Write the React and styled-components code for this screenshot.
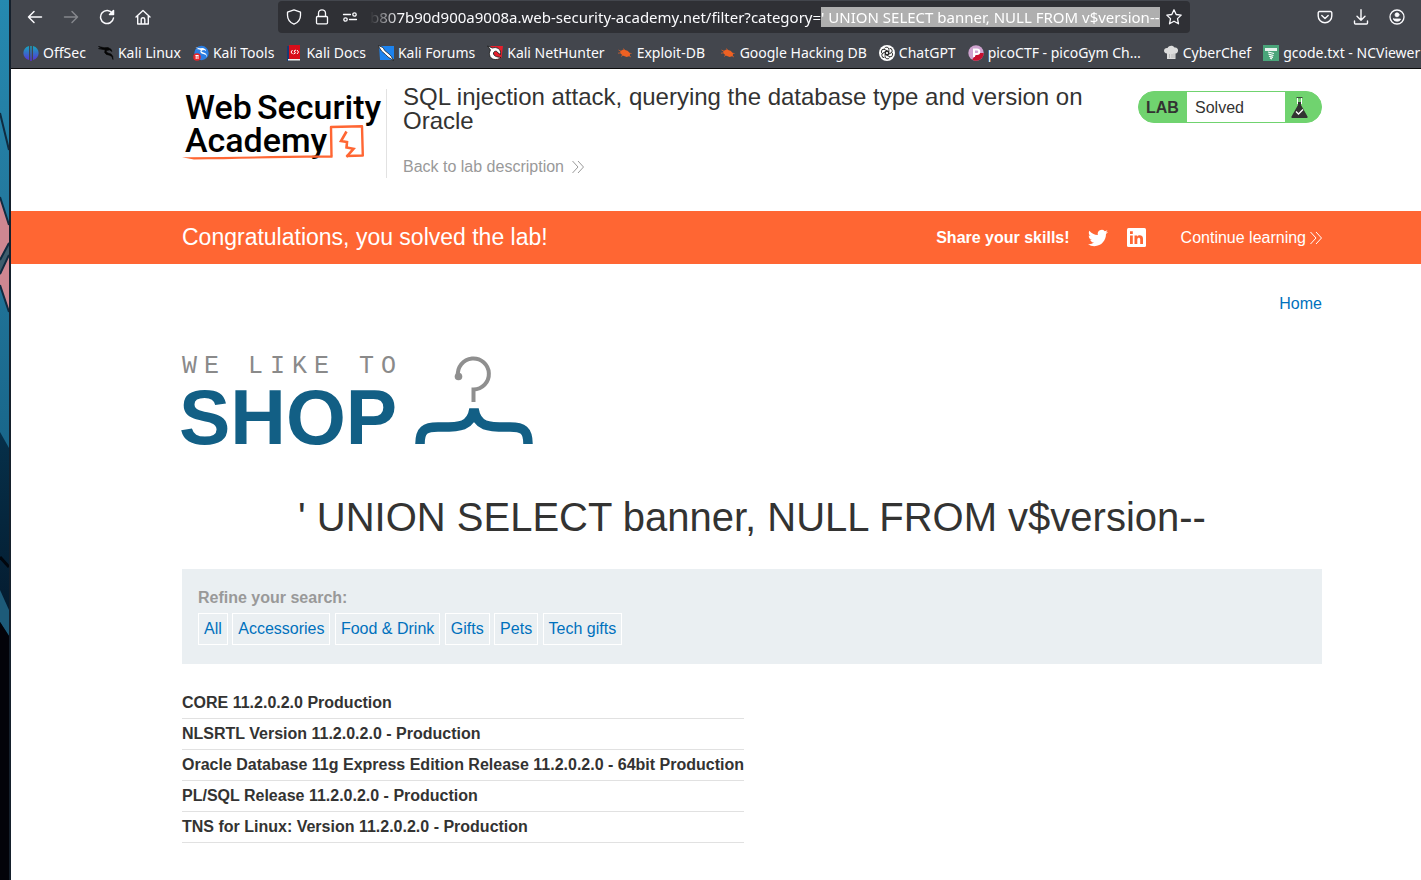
import React, { useEffect, useRef } from "react";
import styled, { createGlobalStyle } from "styled-components";

const GlobalStyle = createGlobalStyle`
  *, *::before, *::after { box-sizing: border-box; }
  body {
    margin: 0;
    background: #fff;
    color: #333332;
    font-family: "Liberation Sans", Arial, sans-serif;
    font-size: 16px;
    overflow-x: hidden;
  }
  a { color: #0071bd; text-decoration: none; }
  svg { display: block; flex: none; }
`;

const Desktop = styled.div`
  display: flex;
  min-height: 100vh;
`;

const Wallpaper = styled.svg`
  width: 9px;
  height: 100vh;
`;

const BrowserWindow = styled.div`
  flex: 1;
  min-width: 0;
  border-left: 2px solid #15202c;
  display: flex;
  flex-direction: column;
`;

const Chrome = styled.header`
  background: #43464d;
  color: #fbfbfe;
  font-family: "Noto Sans", sans-serif;
  font-size: 14px;
  border-bottom: 1px solid #0c0c0d;
`;

const Toolbar = styled.nav`
  display: flex;
  align-items: center;
  height: 34px;
  padding: 0 14px;
`;

const ToolButton = styled.button`
  display: flex;
  align-items: center;
  justify-content: center;
  width: 20px;
  height: 24px;
  margin-right: ${(p) => (p.$last ? 0 : 16)}px;
  padding: 0;
  border: 0;
  background: none;
  color: ${(p) => (p.disabled ? "#85878c" : "#fbfbfe")};
`;

const AddressBar = styled.div`
  flex: 1;
  min-width: 0;
  display: flex;
  align-items: center;
  height: 32px;
  margin: 0 125px;
  padding: 0 6px;
  border-radius: 4px;
  background: #2f3035;
`;

const AddressButton = styled(ToolButton)`
  margin-right: ${(p) => (p.$last ? 0 : 8)}px;
`;

const AddressInput = styled.input`
  flex: 1;
  min-width: 0;
  height: 20px;
  margin: 0 4px 0 2px;
  padding: 0;
  border: 0;
  outline: 0;
  background: none;
  color: #fbfbfe;
  font: 15px/20px "Noto Sans", sans-serif;
  mask-image: linear-gradient(to right, transparent, #000 30px);
  &::selection { background: #afafaf; color: #fff; }
`;

const Bookmarks = styled.nav`
  display: flex;
  gap: 12px;
  height: 34px;
  padding: 4px 0 0 12px;
  align-items: center;
  overflow: hidden;
`;

const Bookmark = styled.a`
  display: flex;
  align-items: center;
  gap: 4px;
  flex: none;
  color: #fbfbfe;
  line-height: 20px;
  white-space: nowrap;
  span { min-width: ${(p) => p.$label || 0}px; }
`;

const Container = styled.div`
  margin: 0 99px 0 171px;
`;

const LabHeader = styled(Container)`
  display: flex;
  align-items: flex-start;
  height: 142px;
  padding-top: 16px;
`;

const LogoLink = styled.a`
  border-right: 1px solid transparent;
  border-image: linear-gradient(to bottom, transparent 5px, #e2e2e2 5px) 1;
`;

const LabInfo = styled.div`
  flex: 1;
  min-width: 0;
  margin: 0 16px;
`;

const LabTitle = styled.h2`
  margin: 0 0 25px;
  font-size: 24px;
  line-height: 24px;
  font-weight: 400;
`;

const ArrowLink = styled.a`
  display: inline-flex;
  align-items: center;
  gap: ${(p) => p.$gap}px;
  line-height: 18px;
  color: ${(p) => p.$color};
`;

const StatusBadge = styled.div`
  display: flex;
  align-items: stretch;
  width: 184px;
  height: 32px;
  margin-top: 6px;
  border: 1px solid #70d36f;
  border-radius: 16px;
  overflow: hidden;
  background: #70d36f;
  line-height: 32px;
  strong { width: 48px; padding-left: 7px; }
  span { flex: 1; padding-left: 8px; background: #fff; }
  svg { margin: 5px 13px 0 6px; }
`;

const Banner = styled.section`
  background: #ff6633;
  color: #fff;
`;

const BannerRow = styled(Container)`
  display: flex;
  align-items: center;
  height: 53px;
  h4 { flex: 1; margin: 0; font-size: 23px; font-weight: 400; }
`;

const ShareLabel = styled.strong`
  margin-right: 18px;
`;

const SocialButton = styled.button`
  display: flex;
  padding: 0;
  border: 0;
  background: none;
  color: #fff;
  margin-right: ${(p) => p.$space}px;
`;

const TopLinks = styled.nav`
  padding: 31px 0 39px;
  text-align: right;
  line-height: 18px;
`;

const ShopLogoArt = styled.svg`
  margin-left: -4px;
`;

const Query = styled.h1`
  margin: 30px 0 29px;
  font-size: 40px;
  line-height: 46px;
  font-weight: 400;
  text-align: center;
`;

const Filters = styled.section`
  height: 95px;
  padding: 20px 16px;
  background: #eaeff2;
`;

const FiltersLabel = styled.div`
  margin-bottom: 6px;
  line-height: 18px;
  font-weight: 700;
  color: #999;
`;

const FilterLink = styled.a`
  display: inline-block;
  padding: 6px 5px;
  border: 1px solid #fff;
  line-height: 18px;
`;

const Results = styled.table`
  margin-top: 23px;
  border-collapse: collapse;
  th {
    height: 31px;
    padding: 1px 0 0;
    text-align: left;
    line-height: 18px;
    border-bottom: 1px solid #e1e1e1;
    white-space: nowrap;
  }
`;

const line = { fill: "none", stroke: "currentColor", strokeWidth: 1.5, strokeLinecap: "round", strokeLinejoin: "round" };

const Icon = ({ children, size = 16 }) => (
  <svg width={size} height={size} viewBox="0 0 16 16" aria-hidden="true" {...line}>{children}</svg>
);

const Chevrons = () => (
  <svg width="12" height="14" viewBox="0 0 12 14" fill="none" stroke="currentColor" strokeWidth="1" aria-hidden="true">
    <path d="M.5 1l5.500 6-5.500 6M6 1l5.500 6L6 13" />
  </svg>
);

const dragon = "M.5 1.500l5.500 1.200 4-.2 3 1.700 1 2.300-2.400-1.600-3 .6-.4 1.600 2.300 1.100 2.500.8 1.700 2.200.3 3.300-1.200-3.100-2.400-1.200-3.100-.8-1.700-2 .6-2.400-3-.8L.5 3.600l3.900.2z";

const bug = <g fill="#ee6123"><path d="M3.400 6.100l3-1.600 4.100 1.300 2.600 2.500-.3 2.800-3.200.9-4-1.500-2.100-2.200z" /><path d="M1.500 5l3 1.500M1 8.200l3-.4M4 11.500l2-1.500M6.500 3.500l1 1.500M14.500 8.500l-2-.2M14 12l-2.500-1.500" stroke="#ee6123" strokeWidth=".7" /></g>;

/* name, favicon, optional minimum label width */
const bookmarks = [
  ["OffSec", <g><defs><linearGradient id="off" x2="0" y2="1"><stop stopColor="#16a6bd" /><stop offset="1" stopColor="#5a2fd6" /></linearGradient></defs><path d="M6 1v14C-1.500 13-1.500 3 6 1zM10 1v14c7.500-2 7.500-12 0-14zM7.300 1h1.400v15H7.300z" fill="url(#off)" /></g>],
  ["Kali Linux", <path d={dragon} fill="#050505" stroke="#050505" strokeWidth=".6" />],
  ["Kali Tools", <g><circle cx="8.500" cy="8" r="7.200" fill="#2a7de1" /><path d={dragon} fill="#fff" transform="translate(2 1) scale(.8)" /><circle cx="4" cy="12" r="3.800" fill="#e5252a" /><path d="M2.500 10.500h3M3.200 10.500v3.500M5 10.500v3.500" stroke="#fff" /></g>],
  ["Kali Docs", <g><path d="M1 1h3v15H1z" fill="#183a73" /><path d="M3 0h11v14H3z" fill="#d90d19" /><path d="M2 14h12v1.500H2z" fill="#eee" /><path d="M6.500 5L5 7l1.500 2M11 5l1.500 2L11 9M10 5L8 6l1.500 2-2 1" fill="none" stroke="#fff" /></g>],
  ["Kali Forums", <g><path d="M1 1h15v13l-3 1H2z" fill="#1c83ef" /><path d="M0 .5l5 2 1.700 3L11 9l2 2 2.500 4.500L10 12 7.500 9.500 3.500 6z" fill="#fff" stroke="#111" strokeWidth=".7" /></g>],
  ["Kali NetHunter", <g><path d="M3 1h13l-1.500 12-4.500 2z" fill="#e51f2c" /><path d="M.5 1l5 2c4-1.500 9 1 8 6.500l-2.500-1.500c-1-3-5-2-4.500 1 .5 2 3 3 7.500 3.500-4 3.500-11 2.500-11.500-3C2 8 3 6 3.500 5z" fill="#fff" stroke="#111" strokeWidth=".8" /></g>],
  ["Exploit-DB", bug, 71],
  ["Google Hacking DB", bug],
  ["ChatGPT", <g><circle cx="8" cy="8" r="8" fill="#fff" /><g fill="none" stroke="#222" strokeWidth=".9">{[0, 60, 120, 180, 240, 300].map((a) => <path key={a} d="M5.500 3.500a2.300 2.300 0 0 1 4.400 1v4L7.500 10" transform={`rotate(${a} 8 8)`} />)}</g></g>],
  ["picoCTF - picoGym Ch…", <g><circle cx="8" cy="8" r="7.700" fill="#cfa3cf" /><path d="M15.700 8A7.700 7.700 0 0 1 4 14.500L10 8z" fill="#c8102e" /><path d="M6 12V4.500h3a2.200 2.200 0 0 1 0 4.500H6" fill="none" stroke="#fff" strokeWidth="2" /></g>, 163],
  ["CyberChef", <g><path d="M4 8.500C-.5 8 .5 2.500 4.500 3 6 0 10 0 11.500 2.500c4-.8 5 5 1 6V14H4z" fill="#ddd" /><path d="M6.500 9v4M9 9v4M11 8.500V13" stroke="#aaa" strokeWidth=".7" /></g>],
  ["gcode.txt - NCViewer", <g><path d="M0 0h16v16H0z" fill="#4aa57a" /><path d="M2 3h12v3H2z" fill="#e8f3ee" /><path d="M5 7l6 1.500M5.500 9.200l5 1.300M6 11.200l4 1.200M7 13l2 1" stroke="#fff" strokeWidth="1.200" /></g>],
];

const url = "b807b90d900a9008a.web-security-academy.net/filter?category=";
const payload = "' UNION SELECT banner, NULL FROM v$version--";

const categories = ["All", "Accessories", "Food & Drink", "Gifts", "Pets", "Tech gifts"];

const versions = [
  "CORE 11.2.0.2.0 Production",
  "NLSRTL Version 11.2.0.2.0 - Production",
  "Oracle Database 11g Express Edition Release 11.2.0.2.0 - 64bit Production",
  "PL/SQL Release 11.2.0.2.0 - Production",
  "TNS for Linux: Version 11.2.0.2.0 - Production",
];

function BrowserChrome() {
  const input = useRef(null);
  useEffect(() => {
    input.current.focus();
    input.current.setSelectionRange(url.length, url.length + payload.length);
    input.current.scrollLeft = input.current.scrollWidth;
  }, []);
  return (
    <Chrome>
      <Toolbar aria-label="Browser toolbar">
        <ToolButton aria-label="Back"><Icon><path d="M14.500 8h-13M7 2.500L1.500 8 7 13.500" /></Icon></ToolButton>
        <ToolButton aria-label="Forward" disabled><Icon><path d="M1.500 8h13M9 2.500L14.500 8 9 13.500" /></Icon></ToolButton>
        <ToolButton aria-label="Reload"><Icon><path d="M13.500 4.500A6.500 6.500 0 1 0 14.500 9" /><path d="M14.500 1.500v4h-4z" fill="currentColor" /></Icon></ToolButton>
        <ToolButton aria-label="Home" $last><Icon><path d="M1 8l7-6.500L15 8M2.700 7v8h10.600V7M6.200 15v-4.500a1.800 1.800 0 0 1 3.600 0V15" strokeWidth="1.400" /></Icon></ToolButton>
        <AddressBar>
          <AddressButton aria-label="Tracking protection"><Icon><path d="M8 .8l6.500 2.400v3c0 4-2.500 7.300-6.500 9-4-1.700-6.500-5-6.500-9v-3z" strokeWidth="1.300" /></Icon></AddressButton>
          <AddressButton aria-label="Site security"><Icon><path d="M3.500 7.500h9a1 1 0 0 1 1 1v5.300a1 1 0 0 1-1 1h-9a1 1 0 0 1-1-1V8.500a1 1 0 0 1 1-1zM4.500 7.500V4.300a3.500 3.500 0 0 1 7 0v3.200" strokeWidth="1.300" /></Icon></AddressButton>
          <AddressButton aria-label="Permissions"><Icon><path d="M1.500 5.500h7M7.500 10.500h7" strokeWidth="1.300" /><circle cx="12.500" cy="5.500" r="1.700" strokeWidth="1.300" /><circle cx="3.500" cy="10.500" r="1.700" strokeWidth="1.300" /></Icon></AddressButton>
          <AddressInput ref={input} aria-label="Address" defaultValue={url + payload} spellCheck={false} />
          <AddressButton aria-label="Bookmark this page" $last><Icon><path d="M8 .8l2.200 4.700 5 .6-3.700 3.500 1 5.200L8 12.200l-4.500 2.600 1-5.200L.8 6.100l5-.6z" strokeWidth="1.300" /></Icon></AddressButton>
        </AddressBar>
        <ToolButton aria-label="Save to Pocket"><Icon><path d="M2.500 2.500h11a1.300 1.300 0 0 1 1.300 1.300V7a6.800 6.800 0 0 1-13.600 0V3.800a1.300 1.300 0 0 1 1.300-1.300zM4.800 6.500L8 9.500l3.200-3" strokeWidth="1.400" /></Icon></ToolButton>
        <ToolButton aria-label="Downloads"><Icon><path d="M8 .8v10M4 7.200l4 4 4-4M1.500 12v2a1 1 0 0 0 1 1h11a1 1 0 0 0 1-1v-2" strokeWidth="1.400" /></Icon></ToolButton>
        <ToolButton aria-label="Account" $last><Icon><circle cx="8" cy="8" r="7" strokeWidth="1.300" /><circle cx="8" cy="5.800" r="2" fill="currentColor" strokeWidth=".8" /><path d="M4.500 10h7c0 3-7 3-7 0z" fill="currentColor" strokeWidth=".8" /></Icon></ToolButton>
      </Toolbar>
      <Bookmarks aria-label="Bookmarks">
        {bookmarks.map(([name, art, label]) => (
          <Bookmark key={name} href="#" $label={label}>
            <svg width="16" height="16" viewBox="0 0 16 16" aria-hidden="true">{art}</svg>
            <span>{name}</span>
          </Bookmark>
        ))}
      </Bookmarks>
    </Chrome>
  );
}

function AcademyLogo() {
  return (
    <svg width="204" height="93" viewBox="0 -5 204 93" aria-label="Web Security Academy">
      <g fill="#000" fontFamily="Roboto, sans-serif" fontSize="34" fontWeight="500">
        <text x="3" y="29">Web</text>
        <text x="75" y="29">Security</text>
        <text x="3" y="62">Academy</text>
      </g>
      <path d="M149.500 66.500L149 37l31-.8.8 29.300-16.300.5" fill="none" stroke="#ff6633" strokeWidth="2.400" strokeLinejoin="round" />
      <path d="M0 67.300c50 .2 98-2 150.500-1.800v2.200C98 67.500 50 69.500 12 69.500z" fill="#ff6633" />
      <path d="M164.500 41.500l-5.500 9.500 6 1-.5 5.500 7 1.300-7 8" fill="none" stroke="#ff6633" strokeWidth="2.600" />
    </svg>
  );
}

function ShopLogo() {
  return (
    <ShopLogoArt width="356" height="112" viewBox="-4 -1 356 112" aria-label="We like to shop">
      <text x="0 22 66 88 110 132 177 199" y="20" fill="#8a8a8a" fontFamily="Liberation Mono, monospace" fontSize="25">WELIKETO</text>
      <text x="-3" y="91" fill="#125f85" fontFamily="Liberation Sans, Arial, sans-serif" fontSize="77" fontWeight="700">SHOP</text>
      <g fill="none">
        <path d="M276 23a15.500 15.500 0 1 1 15.500 13.500V49" stroke="#8f8f8f" strokeWidth="4" />
        <circle cx="276.500" cy="23.500" r="3.800" fill="#8f8f8f" />
        <path d="M238 91c0-14 5-17 18-17 20 0 33 1 36-18 3 19 16 18 36 18 13 0 18 3 18 17" stroke="#125f85" strokeWidth="9.500" />
      </g>
    </ShopLogoArt>
  );
}

function DesktopEdge() {
  return (
    <Wallpaper viewBox="0 0 9 880" preserveAspectRatio="none" aria-hidden="true">
      <defs>
        <linearGradient id="sky" x2="0" y2="1">
          <stop stopColor="#2589b0" /><stop offset=".25" stopColor="#23789d" /><stop offset=".5" stopColor="#19678b" />
        </linearGradient>
        <linearGradient id="night" x2="0" y2="1">
          <stop stopColor="#06304a" /><stop offset=".4" stopColor="#041c30" /><stop offset="1" stopColor="#030309" />
        </linearGradient>
      </defs>
      <path d="M0 0h9v880H0z" fill="url(#sky)" />
      <path d="M0 197l9 28v87l-9-27z" fill="#cf8791" />
      <path d="M0 259l9-17v13l-9 20z" fill="#3e5d6d" />
      <path d="M0 113l9 37M0 197l9 28M0 260l9-17M0 274l9-19M0 285l9 27" stroke="#102b40" strokeWidth="2" />
      <path d="M0 432l9 16v432H0z" fill="url(#night)" />
      <path d="M0 557l9 10" stroke="#01060d" strokeWidth="3" />
      <path d="M0 590l9 20v26l-9-14z" fill="#1d5b79" />
      <path d="M0 622l9 14v244H0z" fill="#030309" />
    </Wallpaper>
  );
}

export default function App() {
  return (
    <>
      <GlobalStyle />
      <Desktop>
        <DesktopEdge />
        <BrowserWindow>
          <BrowserChrome />
          <LabHeader>
            <LogoLink href="#"><AcademyLogo /></LogoLink>
            <LabInfo>
              <LabTitle>SQL injection attack, querying the database type and version on Oracle</LabTitle>
              <ArrowLink href="#" $gap={8} $color="#999">Back to lab description<Chevrons /></ArrowLink>
            </LabInfo>
            <StatusBadge>
              <strong>LAB</strong>
              <span>Solved</span>
              <svg width="17" height="21" viewBox="0 0 17 21" aria-hidden="true">
                <path d="M5.500.7h6" stroke="#333332" strokeWidth="1" />
                <path d="M6.500 1v6M10.500 1v6" stroke="#fff" strokeWidth="1" />
                <path d="M7 5h3v3l6.500 11.500c.3.800 0 1.500-1 1.500h-14c-1 0-1.300-.7-1-1.500L7 8z" fill="#333332" />
                <path d="M5 14.500l2.500 2.500 4.500-4.500" fill="none" stroke="#fff" strokeWidth="1.300" />
              </svg>
            </StatusBadge>
          </LabHeader>
          <Banner>
            <BannerRow>
              <h4>Congratulations, you solved the lab!</h4>
              <ShareLabel>Share your skills!</ShareLabel>
              <SocialButton aria-label="Share on Twitter" $space={19}>
                <svg width="20" height="20" viewBox="0 0 24 24" fill="currentColor" aria-hidden="true">
                  <path d="M23.950 4.570a10 10 0 0 1-2.820.770 4.960 4.960 0 0 0 2.160-2.720c-.950.550-2 .950-3.130 1.180a4.920 4.920 0 0 0-8.380 4.480C7.690 8.090 4.070 6.130 1.640 3.160a4.820 4.820 0 0 0-.670 2.480c0 1.710.870 3.210 2.190 4.100a4.900 4.900 0 0 1-2.230-.620v.060a4.920 4.920 0 0 0 3.950 4.830 5 5 0 0 1-2.210.080 4.940 4.940 0 0 0 4.600 3.420A9.870 9.870 0 0 1 0 19.540a13.990 13.990 0 0 0 7.560 2.210c9.050 0 14-7.500 14-13.980 0-.210 0-.420-.020-.630A9.940 9.940 0 0 0 24 4.590z" />
                </svg>
              </SocialButton>
              <SocialButton aria-label="Share on LinkedIn" $space={35}>
                <svg width="19" height="19" viewBox="0 0 19 19" aria-hidden="true">
                  <rect width="19" height="19" rx="1.500" fill="#fff" />
                  <path d="M3 7.500h2.800V16H3zM3 3.300h2.800V6H3zM7.500 7.500h2.700v1.200c1.200-2.200 5.800-2 5.800 2V16h-2.800v-4.700c0-2.300-2.900-2.100-2.900 0V16H7.500z" fill="#ff6633" />
                </svg>
              </SocialButton>
              <ArrowLink href="#" $gap={4} $color="#fff">Continue learning<Chevrons /></ArrowLink>
            </BannerRow>
          </Banner>
          <Container as="main">
            <TopLinks><a href="#">Home</a></TopLinks>
            <ShopLogo />
            <Query>{payload}</Query>
            <Filters>
              <FiltersLabel>Refine your search:</FiltersLabel>
              <nav aria-label="Categories">
                {categories.map((c) => (
                  <React.Fragment key={c}><FilterLink href="#">{c}</FilterLink>{" "}</React.Fragment>
                ))}
              </nav>
            </Filters>
            <Results>
              <tbody>
                {versions.map((v) => <tr key={v}><th scope="row">{v}</th></tr>)}
              </tbody>
            </Results>
          </Container>
        </BrowserWindow>
      </Desktop>
    </>
  );
}
